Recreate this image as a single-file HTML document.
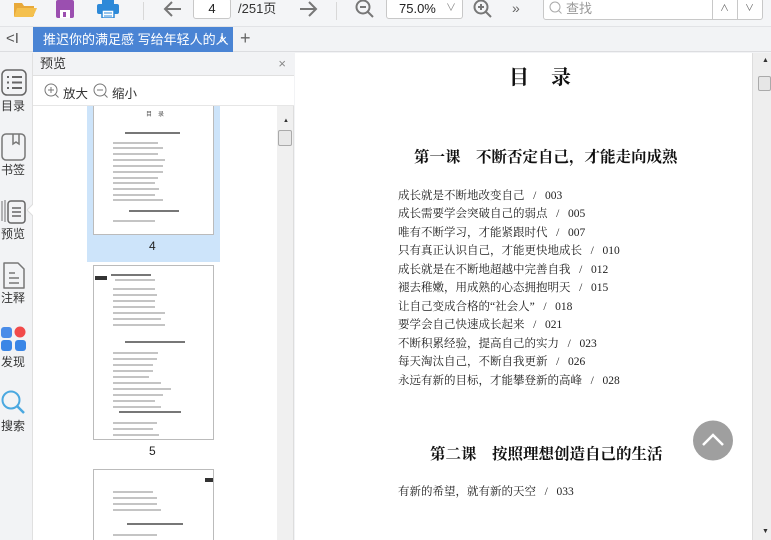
<!DOCTYPE html>
<html style="overflow:hidden"><head><meta charset="utf-8">
<style>
*{margin:0;padding:0;box-sizing:border-box}
html,body{width:771px;height:540px;overflow:hidden}
body{background:#f2f3f5;font-family:"Liberation Sans","Noto Sans CJK SC",sans-serif;position:relative;color:#333}
.a{position:absolute}
.serif{font-family:"Liberation Serif","Noto Serif CJK SC",serif}
.tl{position:absolute;height:1.5px;background:#c4c4c4}
.tl.h{background:#777;height:2px}
.ent{position:absolute;left:398px;font-size:11.5px;color:#222;font-family:"Liberation Serif","Noto Serif CJK SC",serif;white-space:pre}
.lbl{position:absolute;left:0;width:26px;text-align:center;font-size:12px;color:#333}
</style></head><body>
<div class="a" style="left:0;top:0;width:771px;height:27px;background:#f4f5f7;border-bottom:1px solid #e2e3e6"></div>
<svg class="a" style="left:12px;top:0" width="26" height="18"><path d="M2 3h8l2 3h10v10H2z" fill="#e8a93a"/><path d="M5 8h20l-4 9H2z" fill="#f4c04e"/></svg>
<svg class="a" style="left:56px;top:0" width="18" height="18"><rect x="0" y="0" width="18" height="18" rx="2" fill="#9b4fb0"/><rect x="4" y="10" width="10" height="8" fill="#fff"/><rect x="7" y="12" width="3" height="5" fill="#9b4fb0"/></svg>
<svg class="a" style="left:97px;top:0" width="22" height="18"><rect x="5" y="0" width="12" height="5" fill="#2d89d8"/><rect x="0" y="4" width="22" height="10" rx="2" fill="#2d89d8"/><rect x="5" y="10" width="12" height="8" fill="#fff" stroke="#2d89d8" stroke-width="1.5"/><line x1="7" y1="13" x2="15" y2="13" stroke="#2d89d8"/><line x1="7" y1="16" x2="15" y2="16" stroke="#2d89d8"/></svg>
<div class="a" style="left:143px;top:2px;width:1px;height:18px;background:#d8d8d8"></div>
<svg class="a" style="left:163px;top:0" width="20" height="18"><path d="M18 9H3M9 2L2 9l7 7" stroke="#777" stroke-width="2" fill="none"/></svg>
<div class="a" style="left:193px;top:-2px;width:38px;height:21px;border:1px solid #c8c8c8;border-radius:3px;background:#fff;font-size:13px;text-align:center;line-height:19px;color:#222">4</div>
<div class="a" style="left:238px;top:0;font-size:13px;line-height:18px;color:#333">/251页</div>
<svg class="a" style="left:298px;top:0" width="20" height="18"><path d="M2 9h15M11 2l7 7-7 7" stroke="#777" stroke-width="2" fill="none"/></svg>
<div class="a" style="left:336px;top:2px;width:1px;height:18px;background:#d8d8d8"></div>
<svg class="a" style="left:355px;top:0" width="20" height="20"><circle cx="8" cy="7" r="6.5" stroke="#777" stroke-width="2" fill="none"/><path d="M5 7h6M13 12l5 5" stroke="#777" stroke-width="2"/></svg>
<div class="a" style="left:386px;top:-2px;width:77px;height:21px;border:1px solid #c8c8c8;border-radius:3px;background:#fff;font-size:13px;line-height:19px;padding-left:12px;color:#222">75.0%<span style="position:absolute;right:6px;top:0;color:#888;font-size:10px">&#8744;</span></div>
<svg class="a" style="left:473px;top:0" width="20" height="20"><circle cx="8" cy="7" r="6.5" stroke="#777" stroke-width="2" fill="none"/><path d="M5 7h6M8 4v6M13 12l5 5" stroke="#777" stroke-width="2"/></svg>
<div class="a" style="left:512px;top:0;font-size:14px;color:#666;line-height:16px">»</div>
<div class="a" style="left:543px;top:-2px;width:220px;height:22px;border:1px solid #c8c8c8;border-radius:3px;background:#fff"></div>
<svg class="a" style="left:549px;top:1px" width="14" height="14"><circle cx="6" cy="6" r="5" stroke="#aaa" fill="none"/><path d="M9.5 9.5l3 3" stroke="#aaa"/></svg>
<div class="a" style="left:566px;top:0;font-size:13px;color:#999;line-height:17px">查找</div>
<div class="a" style="left:712px;top:-2px;width:1px;height:22px;background:#c8c8c8"></div>
<div class="a" style="left:737px;top:-2px;width:1px;height:22px;background:#c8c8c8"></div>
<div class="a" style="left:720px;top:1px;font-size:9px;color:#666">&#8743;</div>
<div class="a" style="left:745px;top:1px;font-size:9px;color:#666">&#8744;</div>
<div class="a" style="left:0;top:28px;width:771px;height:24px;background:#f2f3f5;border-bottom:1px solid #dcdde0"></div>
<div class="a" style="left:6px;top:30px;font-size:15px;color:#555">&lt;I</div>
<div class="a" style="left:33px;top:27px;width:200px;height:25px;background:#4a84d4;color:#fff;font-size:13px;line-height:25px;padding-left:10px;white-space:nowrap;overflow:hidden">推迟你的满足感 写给年轻人的人<span style="position:absolute;right:6px;top:0">×</span></div>
<div class="a" style="left:240px;top:28px;font-size:18px;color:#666">+</div>
<div class="a" style="left:0;top:53px;width:33px;height:487px;background:#f2f3f5;border-right:1px solid #e0e0e0"></div>
<svg class="a" style="left:1px;top:69px" width="26" height="27"><rect x="1" y="1" width="24" height="25" rx="5" stroke="#666" stroke-width="1.5" fill="none"/><path d="M6 8h2M11 8h10M6 13.5h2M11 13.5h10M6 19h2M11 19h10" stroke="#666" stroke-width="2"/></svg>
<div class="lbl" style="top:97px">目录</div>
<svg class="a" style="left:1px;top:133px" width="26" height="28"><rect x="1" y="1" width="23" height="26" rx="4" stroke="#777" stroke-width="1.5" fill="none"/><path d="M12 1v10l3-2 3 2V1" stroke="#777" stroke-width="1.5" fill="none"/></svg>
<div class="lbl" style="top:161px">书签</div>
<svg class="a" style="left:1px;top:197px" width="26" height="28"><path d="M1 24V4M4 25V3" stroke="#888" stroke-width="1.2"/><rect x="7" y="4" width="17" height="22" rx="3" stroke="#666" stroke-width="1.5" fill="none"/><path d="M11 11h9M11 15h9M11 19h9" stroke="#666" stroke-width="1.5"/></svg>
<svg class="a" style="left:27px;top:203px" width="7" height="14"><path d="M7 0L0 7l7 7" fill="#fff" stroke="#ddd"/></svg>
<div class="lbl" style="top:225px">预览</div>
<svg class="a" style="left:2px;top:262px" width="24" height="28"><path d="M2 1h14l6 6v19H2z" stroke="#777" stroke-width="1.5" fill="none" stroke-linejoin="round"/><path d="M7 11h6M7 16h10M7 21h10" stroke="#777" stroke-width="1.5"/></svg>
<div class="lbl" style="top:289px">注释</div>
<svg class="a" style="left:1px;top:325px" width="26" height="26"><rect x="0" y="2" width="11" height="11" rx="3" fill="#4a8ce8"/><circle cx="19" cy="7" r="5.5" fill="#f24a4a"/><rect x="0" y="15" width="11" height="11" rx="3" fill="#3a86e6"/><rect x="14" y="15" width="11" height="11" rx="3" fill="#3a86e6"/></svg>
<div class="lbl" style="top:353px">发现</div>
<svg class="a" style="left:1px;top:390px" width="26" height="26"><circle cx="10" cy="10" r="8.5" stroke="#4aa8e0" stroke-width="2" fill="none"/><path d="M16 16l7 7" stroke="#4aa8e0" stroke-width="2.5"/></svg>
<div class="lbl" style="top:417px">搜索</div>
<div class="a" style="left:33px;top:53px;width:261px;height:23px;background:#f2f3f5;border-bottom:1px solid #e0e0e0;font-size:13px;line-height:22px;padding-left:7px;color:#333">预览<span style="position:absolute;right:8px;top:0;color:#888">×</span></div>
<div class="a" style="left:33px;top:76px;width:261px;height:30px;background:#fff;border-bottom:1px solid #e6e6e6"></div>
<svg class="a" style="left:44px;top:83px" width="16" height="16"><circle cx="7" cy="7" r="6" stroke="#777" fill="none"/><path d="M4 7h6M7 4v6M11.5 11.5l3 3" stroke="#777"/></svg>
<div class="a" style="left:63px;top:83px;font-size:12.5px;color:#333">放大</div>
<svg class="a" style="left:93px;top:83px" width="16" height="16"><circle cx="7" cy="7" r="6" stroke="#777" fill="none"/><path d="M4 7h6M11.5 11.5l3 3" stroke="#777"/></svg>
<div class="a" style="left:112px;top:83px;font-size:12.5px;color:#333">缩小</div>
<div class="a" style="left:33px;top:106px;width:261px;height:434px;background:#fff;border-right:1px solid #ddd;overflow:hidden">
  <div class="a" style="left:54px;top:0;width:133px;height:156px;background:#cde4fa"></div>
  <div class="a" style="left:60px;top:-5px;width:121px;height:134px;background:#fff;border:1px solid #bbb"></div>
  <div class="a" style="left:113px;top:3px;font-size:6px;color:#555">目　录</div>
  <div class="tl h" style="left:92px;top:26px;width:55px"></div>
  <div class="tl" style="left:80px;top:36px;width:45px"></div><div class="tl" style="left:80px;top:41px;width:50px"></div><div class="tl" style="left:80px;top:47px;width:45px"></div><div class="tl" style="left:80px;top:53px;width:52px"></div><div class="tl" style="left:80px;top:59px;width:50px"></div><div class="tl" style="left:80px;top:65px;width:50px"></div><div class="tl" style="left:80px;top:71px;width:45px"></div><div class="tl" style="left:80px;top:76px;width:42px"></div><div class="tl" style="left:80px;top:82px;width:46px"></div><div class="tl" style="left:80px;top:88px;width:42px"></div><div class="tl" style="left:80px;top:93px;width:50px"></div>
  <div class="tl h" style="left:96px;top:104px;width:50px"></div>
  <div class="tl" style="left:80px;top:114px;width:42px"></div>
  <div class="a" style="left:116px;top:133px;font-size:12px;color:#222">4</div>
  <div class="a" style="left:60px;top:159px;width:121px;height:175px;background:#fff;border:1px solid #bbb"></div>
  <div class="tl" style="left:62px;top:170px;width:12px;height:4px;background:#333"></div>
  <div class="tl h" style="left:78px;top:168px;width:40px"></div>
  <div class="tl" style="left:82px;top:173px;width:40px"></div>
  <div class="tl" style="left:80px;top:182px;width:42px"></div><div class="tl" style="left:80px;top:188px;width:44px"></div><div class="tl" style="left:80px;top:194px;width:42px"></div><div class="tl" style="left:80px;top:200px;width:42px"></div><div class="tl" style="left:80px;top:206px;width:52px"></div><div class="tl" style="left:80px;top:212px;width:48px"></div><div class="tl" style="left:80px;top:218px;width:52px"></div>
  <div class="tl h" style="left:92px;top:235px;width:60px"></div>
  <div class="tl" style="left:80px;top:246px;width:45px"></div><div class="tl" style="left:80px;top:252px;width:44px"></div><div class="tl" style="left:80px;top:258px;width:40px"></div><div class="tl" style="left:80px;top:264px;width:40px"></div><div class="tl" style="left:80px;top:270px;width:36px"></div><div class="tl" style="left:80px;top:276px;width:48px"></div><div class="tl" style="left:80px;top:282px;width:58px"></div><div class="tl" style="left:80px;top:288px;width:50px"></div><div class="tl" style="left:80px;top:294px;width:42px"></div><div class="tl" style="left:80px;top:300px;width:48px"></div>
  <div class="tl h" style="left:86px;top:305px;width:62px"></div>
  <div class="tl" style="left:80px;top:316px;width:44px"></div><div class="tl" style="left:80px;top:322px;width:40px"></div><div class="tl" style="left:80px;top:328px;width:46px"></div>
  <div class="a" style="left:116px;top:338px;font-size:12px;color:#222">5</div>
  <div class="a" style="left:60px;top:363px;width:121px;height:100px;background:#fff;border:1px solid #bbb"></div>
  <div class="tl" style="left:172px;top:372px;width:8px;height:4px;background:#333"></div>
  <div class="tl" style="left:80px;top:385px;width:40px"></div><div class="tl" style="left:80px;top:391px;width:44px"></div><div class="tl" style="left:80px;top:397px;width:44px"></div><div class="tl" style="left:80px;top:403px;width:48px"></div>
  <div class="tl h" style="left:94px;top:417px;width:56px"></div>
  <div class="tl" style="left:80px;top:428px;width:44px"></div>
  <div class="a" style="left:244px;top:0;width:16px;height:434px;background:#f0f0f0"></div>
  <div class="a" style="left:250px;top:12px;font-size:6px;color:#333">▲</div>
  <div class="a" style="left:245px;top:24px;width:14px;height:16px;background:#e8e8e8;border:1px solid #aaa;border-radius:2px"></div>
</div>
<div class="a" style="left:295px;top:53px;width:457px;height:487px;background:#fff"></div>
<div class="a" style="left:752px;top:53px;width:19px;height:487px;background:#eeeeee;border-left:1px solid #ddd"></div>
<div class="a" style="left:762px;top:57px;font-size:7px;color:#333">▲</div>
<div class="a" style="left:758px;top:76px;width:13px;height:15px;background:#e6e6e6;border:1px solid #aaa;border-radius:2px"></div>
<div class="a serif" style="left:509px;top:61px;font-size:20px;font-weight:bold;color:#111;letter-spacing:1px">目　录</div>
<div class="a serif" style="left:414px;top:145px;font-size:15.5px;font-weight:bold;color:#111;white-space:pre">第一课　不断否定自己，才能走向成熟</div>
<div class="ent" style="top:187px">成长就是不断地改变自己   /   003</div>
<div class="ent" style="top:205px">成长需要学会突破自己的弱点   /   005</div>
<div class="ent" style="top:224px">唯有不断学习，才能紧跟时代   /   007</div>
<div class="ent" style="top:242px">只有真正认识自己，才能更快地成长   /   010</div>
<div class="ent" style="top:261px">成长就是在不断地超越中完善自我   /   012</div>
<div class="ent" style="top:279px">褪去稚嫩，用成熟的心态拥抱明天   /   015</div>
<div class="ent" style="top:298px">让自己变成合格的“社会人”   /   018</div>
<div class="ent" style="top:316px">要学会自己快速成长起来   /   021</div>
<div class="ent" style="top:335px">不断积累经验，提高自己的实力   /   023</div>
<div class="ent" style="top:353px">每天淘汰自己，不断自我更新   /   026</div>
<div class="ent" style="top:372px">永远有新的目标，才能攀登新的高峰   /   028</div>
<div class="a serif" style="left:430px;top:442px;font-size:15.5px;font-weight:bold;color:#111;white-space:pre">第二课　按照理想创造自己的生活</div>
<div class="ent" style="top:483px">有新的希望，就有新的天空   /   033</div>
<svg class="a" style="left:693px;top:420px" width="40" height="41"><circle cx="20" cy="20.5" r="20" fill="#9f9f9f"/><path d="M10 25l10-10 10 10" stroke="#fff" stroke-width="2.5" fill="none"/></svg>
<div class="a" style="left:762px;top:528px;font-size:7px;color:#333">▼</div>
</body></html>
